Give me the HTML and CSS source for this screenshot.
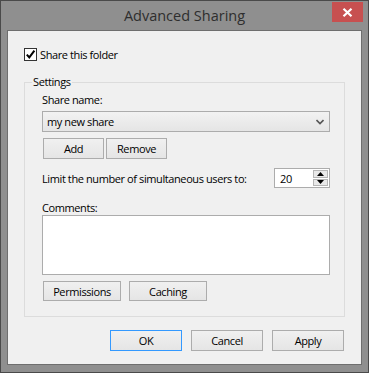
FILE: index.html
```html
<!DOCTYPE html>
<html lang="en">
<head>
  <meta charset="UTF-8">
  <title>Advanced Sharing</title>
  <link rel="stylesheet" href="styles.css">
</head>
<body>
  <div class="window">
    <div class="titlebar">
      <span></span>
      <h1 class="title">Advanced Sharing</h1>
      <div class="close-wrap">
        <div class="close-btn">
          <svg width="11" height="9" viewBox="0 0 11 9"><path d="M1.5 0.8 L9.5 8.2 M9.5 0.8 L1.5 8.2" stroke="#fff" stroke-width="2.2"/></svg>
        </div>
      </div>
    </div>

    <div class="client">
      <!-- partage -->
      <label class="check-row">
        <span class="checkbox">
          <svg width="11" height="11" viewBox="0 0 11 11"><path d="M1.8 5.6 L4.3 8.4 L9.4 1.6" fill="none" stroke="#000" stroke-width="2"/></svg>
        </span>
        Share this folder
      </label>

      <fieldset class="group">
        <legend>Settings</legend>

        <div class="field-label">Share name:</div>
        <div class="combo">
          <span>my new share</span>
          <svg width="8" height="6" viewBox="0 0 8 6"><path d="M0.5 1 L4 4.5 L7.5 1" fill="none" stroke="#555" stroke-width="1.6"/></svg>
        </div>

        <div class="btn-row">
          <div class="btn btn-small">Add</div>
          <div class="btn btn-small">Remove</div>
        </div>

        <div class="limit-row">
          <span>Limit the number of simultaneous users to:</span>
          <div class="spin">
            <span class="spin-value">20</span>
            <div class="spin-btns">
              <div class="spin-btn"><svg width="7" height="4" viewBox="0 0 7 4"><path d="M0 4 L3.5 0 L7 4 Z" fill="#000"/></svg></div>
              <div class="spin-btn"><svg width="7" height="4" viewBox="0 0 7 4"><path d="M0 0 L3.5 4 L7 0 Z" fill="#000"/></svg></div>
            </div>
          </div>
        </div>

        <div class="field-label comments-label">Comments:</div>
        <div class="textarea"></div>

        <div class="btn-row btn-row-bottom">
          <div class="btn btn-wide">Permissions</div>
          <div class="btn btn-wide">Caching</div>
        </div>
      </fieldset>

      <div class="dialog-buttons">
        <div class="btn btn-dialog btn-default">OK</div>
        <div class="btn btn-dialog">Cancel</div>
        <div class="btn btn-dialog">Apply</div>
      </div>
    </div>
  </div>
</body>
</html>
```

FILE: styles.css
```css
* {
  margin: 0;
  padding: 0;
  box-sizing: border-box;
}

body {
  font-family: "Open Sans", "Noto Sans", sans-serif;
  font-size: 11px;
  letter-spacing: -0.4px;
  color: #000;
  background: #fff;
}

.window {
  width: 369px;
  height: 373px;
  border: 1px solid #4a4a4a;
  background: #8f8f8f;
  padding: 0 6px 7px 6px;
  display: flex;
  flex-direction: column;
}

.titlebar {
  height: 29px;
  display: grid;
  grid-template-columns: 1fr auto 1fr;
  align-items: start;
}

.title {
  font-weight: 400;
  font-size: 14.5px;
  letter-spacing: 0;
  color: #2e2e2e;
  margin-top: 6px;
  line-height: 18px;
}

.close-wrap {
  display: flex;
  justify-content: flex-end;
  margin-right: -1px;
}

.close-btn {
  width: 31px;
  height: 20px;
  margin-top: 1px;
  background: #c75050;
  display: flex;
  align-items: center;
  justify-content: center;
}

.client {
  flex: 1;
  border: 1px solid #6e6e6e;
  background: #f0f0f0;
  padding: 17px 0 0 16px;
}

.check-row {
  display: flex;
  align-items: center;
  gap: 3px;
  height: 13px;
}

.checkbox {
  width: 13px;
  height: 13px;
  border: 1px solid #333;
  background: #fff;
  display: flex;
  align-items: center;
  justify-content: center;
}

.group {
  width: 321px;
  height: 243px;
  margin-top: 13px;
  border: 1px solid #dcdcdc;
  padding: 0 0 0 17px;
}

.group legend {
  margin-left: -10px;
  padding: 0 1px;
  line-height: 16px;
}

.field-label {
  line-height: 15px;
  margin-top: 2px;
}

.combo {
  width: 288px;
  height: 21px;
  margin-top: 4px;
  border: 1px solid #acacac;
  background: linear-gradient(#f2f2f2, #e5e5e5);
  display: flex;
  align-items: center;
  justify-content: space-between;
  padding: 0 5px 0 4px;
}

.btn {
  border: 1px solid #acacac;
  background: linear-gradient(#f0f0f0, #e5e5e5);
  display: flex;
  align-items: center;
  justify-content: center;
  height: 21px;
}

.btn-row {
  display: flex;
  gap: 2px;
  margin-top: 6px;
  padding-left: 1px;
}

.btn-small {
  width: 61px;
}

.limit-row {
  display: flex;
  align-items: center;
  justify-content: space-between;
  width: 288px;
  margin-top: 9px;
}

.spin {
  width: 56px;
  height: 20px;
  border: 1px solid #acacac;
  background: #fff;
  display: flex;
  align-items: center;
  justify-content: space-between;
  padding: 1px 1px 1px 5px;
}

.spin-btns {
  display: flex;
  flex-direction: column;
  gap: 1px;
  height: 16px;
}

.spin-btn {
  width: 15px;
  height: 8px;
  border: 1px solid #b5b5b5;
  background: #e8e8e8;
  display: flex;
  align-items: center;
  justify-content: center;
}

.comments-label {
  margin-top: 12px;
}

.textarea {
  width: 288px;
  height: 60px;
  border: 1px solid #acacac;
  background: #fff;
}

.btn-row-bottom {
  gap: 8px;
  margin-top: 6px;
}

.btn-wide {
  width: 78px;
  height: 20px;
}

.dialog-buttons {
  display: flex;
  justify-content: flex-end;
  gap: 9px;
  width: 320px;
  margin-top: 13px;
}

.btn-dialog {
  width: 72px;
  height: 21px;
}

.btn-default {
  border-color: #3399ff;
}
```
